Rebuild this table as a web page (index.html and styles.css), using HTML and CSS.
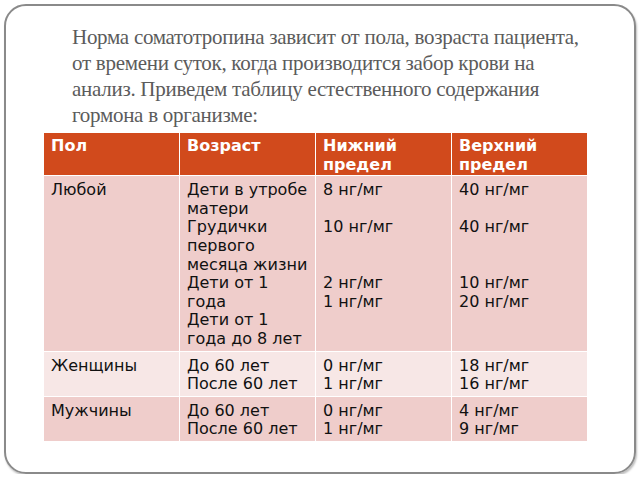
FILE: index.html
```html
<!DOCTYPE html>
<html>
<head>
<meta charset="utf-8">
<link rel="stylesheet" href="styles.css">
</head>
<body>
<div class="slide">
  <p class="intro">Норма соматотропина зависит от пола, возраста пациента, от времени суток, когда производится забор крови на анализ. Приведем таблицу естественного содержания гормона в организме:</p>
  <table class="norms">
    <thead>
      <tr><th>Пол</th><th>Возраст</th><th>Нижний<br>предел</th><th>Верхний<br>предел</th></tr>
    </thead>
    <tbody>
      <tr class="odd">
        <td>Любой</td>
        <td>Дети в утробе матери<br>Грудички первого месяца жизни<br>Дети от 1 года<br>Дети от 1 года до 8 лет</td>
        <td>8 нг/мг<br><br>10 нг/мг<br><br><br>2 нг/мг<br>1 нг/мг</td>
        <td>40 нг/мг<br><br>40 нг/мг<br><br><br>10 нг/мг<br>20 нг/мг</td>
      </tr>
      <tr class="even">
        <td>Женщины</td>
        <td>До 60 лет<br>После 60 лет</td>
        <td>0 нг/мг<br>1 нг/мг</td>
        <td>18 нг/мг<br>16 нг/мг</td>
      </tr>
      <tr class="odd">
        <td>Мужчины</td>
        <td>До 60 лет<br>После 60 лет</td>
        <td>0 нг/мг<br>1 нг/мг</td>
        <td>4 нг/мг<br>9 нг/мг</td>
      </tr>
    </tbody>
  </table>
</div>
</body>
</html>
```
FILE: styles.css
```css
html, body {
  margin: 0;
  padding: 0;
  background: #ffffff;
}
.slide {
  box-sizing: border-box;
  margin: 4px 0 0 4px;
  width: 632px;
  height: 470px;
  border: 2px solid #8a8a8a;
  border-radius: 22px;
  box-shadow: 1px 2px 2px rgba(0,0,0,0.25);
  padding: 18px 0 0 37px;
}
.intro {
  margin: 0 0 0 29px;
  width: 522px;
  font-family: "Liberation Serif", serif;
  font-size: 21px;
  line-height: 26px;
  color: #5b5b5b;
  letter-spacing: -0.28px;
}
.norms {
  margin-top: 4px;
  border-collapse: collapse;
  font-family: "DejaVu Sans", sans-serif;
  font-size: 16px;
  line-height: 18.6px;
  color: #111;
  table-layout: fixed;
  width: 544px;
}
.norms th, .norms td {
  width: 136px;
  box-sizing: border-box;
  text-align: left;
  vertical-align: top;
  padding: 5px 6px 2px 7px;
  border: 1px solid #ffffff;
}
.norms th {
  background: #d14a1c;
  color: #ffffff;
  font-weight: bold;
  padding-top: 4px;
  padding-bottom: 1px;
}
.norms tr.odd td { background: #efcdcb; }
.norms tr.even td { background: #f7e7e6; }
```
